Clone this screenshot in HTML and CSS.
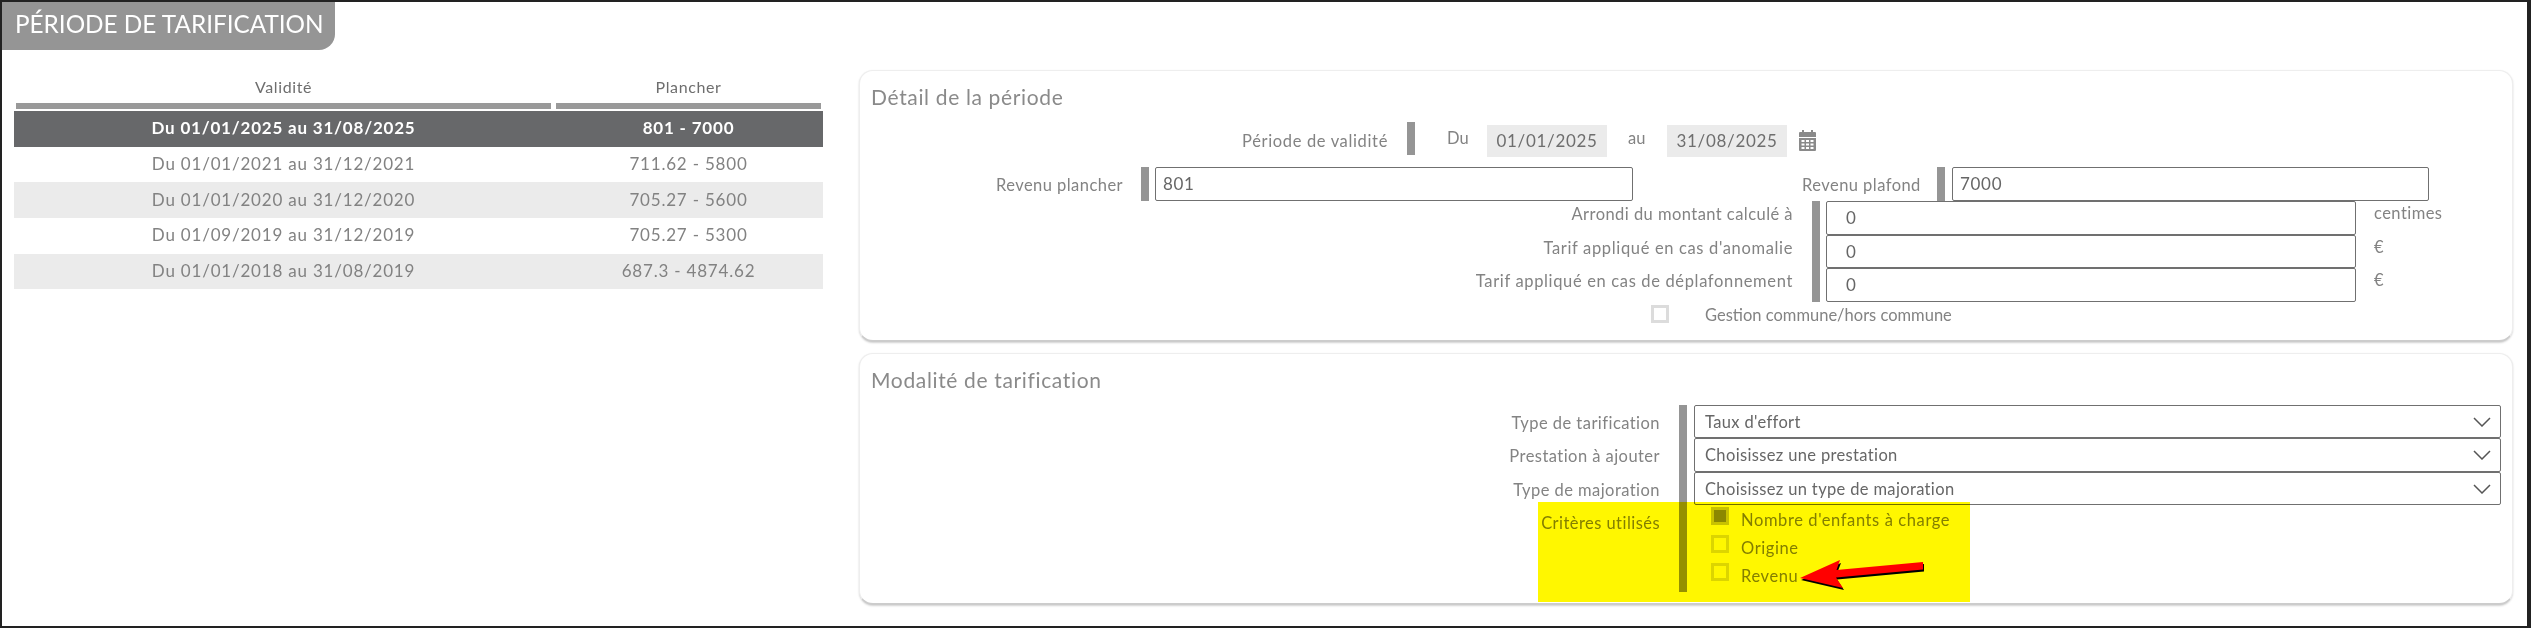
FILE: index.html
```html
<!DOCTYPE html>
<html lang="fr">
<head>
<meta charset="utf-8">
<title>Période de tarification</title>
<link rel="stylesheet" href="styles.css">
</head>
<body>
<div class="frame">
  <h1 class="tab">PÉRIODE DE TARIFICATION</h1>
  <div class="main">
    <section class="list">
      <div class="list-row list-head"><div class="th">Validité</div><div class="th">Plancher</div></div>
      <div class="list-row selected"><div>Du 01/01/2025 au 31/08/2025</div><div>801 - 7000</div></div>
      <div class="list-row"><div>Du 01/01/2021 au 31/12/2021</div><div>711.62 - 5800</div></div>
      <div class="list-row shaded"><div>Du 01/01/2020 au 31/12/2020</div><div>705.27 - 5600</div></div>
      <div class="list-row"><div>Du 01/09/2019 au 31/12/2019</div><div>705.27 - 5300</div></div>
      <div class="list-row shaded"><div>Du 01/01/2018 au 31/08/2019</div><div>687.3 - 4874.62</div></div>
    </section>
    <div class="panels">
      <section class="panel panel-detail">
        <h2 class="panel-title">Détail de la période</h2>
        <div class="validity">
          <div class="label wide validity-label">Période de validité</div>
          <div class="bar"></div>
          <span class="word word-du">Du</span>
          <div class="date">01/01/2025</div>
          <span class="word word-au">au</span>
          <div class="date">31/08/2025</div>
          <svg class="cal" viewBox="0 0 17 21" width="17" height="21" aria-hidden="true">
            <path fill="#8a8a8a" fill-rule="evenodd" d="M3 0h2v2h7V0h2v2h2a1 1 0 0 1 1 1v4H0V3a1 1 0 0 1 1-1h2zM0 8h17v12a1 1 0 0 1-1 1H1a1 1 0 0 1-1-1zM2.500 10v2h3v-2zM7 10v2h3v-2zM11.500 10v2h3v-2zM2.500 13.500v2h3v-2zM7 13.500v2h3v-2zM11.500 13.500v2h3v-2zM2.500 17v2h3v-2zM7 17v2h3v-2zM11.500 17v2h3v-2z"/>
          </svg>
        </div>
        <div class="revenue">
          <div class="label rev-floor-label">Revenu plancher</div>
          <div class="bar"></div>
          <div class="input rev-floor">801</div>
          <div class="label rev-ceil-label">Revenu plafond</div>
          <div class="bar"></div>
          <div class="input rev-ceil">7000</div>
        </div>
        <div class="amounts">
          <div class="label">Arrondi du montant calculé à</div>
          <div class="bar amounts-bar"></div>
          <div class="input amount">0</div>
          <div class="unit">centimes</div>
          <div class="label wide">Tarif appliqué en cas d'anomalie</div>
          <div class="input amount">0</div>
          <div class="unit">€</div>
          <div class="label wide">Tarif appliqué en cas de déplafonnement</div>
          <div class="input amount">0</div>
          <div class="unit">€</div>
        </div>
        <div class="commune">
          <span class="check"></span>
          <span class="label tight">Gestion commune/hors commune</span>
        </div>
      </section>
      <section class="panel panel-mode">
        <h2 class="panel-title">Modalité de tarification</h2>
        <div class="mode">
          <div class="label">Type de tarification</div>
          <div class="bar mode-bar"></div>
          <div class="select"><span>Taux d'effort</span><svg viewBox="0 0 18 10" width="18" height="10" aria-hidden="true"><path d="M1 1l8 8 8-8" fill="none" stroke="#555" stroke-width="1.500"/></svg></div>
          <div class="label">Prestation à ajouter</div>
          <div class="select"><span>Choisissez une prestation</span><svg viewBox="0 0 18 10" width="18" height="10" aria-hidden="true"><path d="M1 1l8 8 8-8" fill="none" stroke="#555" stroke-width="1.500"/></svg></div>
          <div class="label">Type de majoration</div>
          <div class="select"><span>Choisissez un type de majoration</span><svg viewBox="0 0 18 10" width="18" height="10" aria-hidden="true"><path d="M1 1l8 8 8-8" fill="none" stroke="#555" stroke-width="1.500"/></svg></div>
          <div class="label criteria-label">Critères utilisés</div>
          <div class="criteria">
            <div class="criterion"><span class="check checked"></span><span class="label criterion-name">Nombre d'enfants à charge</span></div>
            <div class="criterion"><span class="check"></span><span class="label criterion-name">Origine</span></div>
            <div class="criterion"><span class="check"></span><span class="label criterion-name">Revenu</span></div>
          </div>
        </div>
      </section>
    </div>
  </div>
  <div class="highlight"></div>
  <svg class="arrow" viewBox="0 0 126 30" width="126" height="30" aria-hidden="true">
    <path d="M1 19L41 2L37.500 11L124 3L124 10.500L37 18.500L44 29Z" fill="#000" transform="translate(0 1)"/>
    <path d="M0 18L40 0L36.500 10L123 2L123 9.500L36 17.500L43 28Z" fill="#ff0000"/>
  </svg>
</div>
</body>
</html>
```

FILE: styles.css
```css
* { box-sizing: border-box; }
html, body { margin: 0; padding: 0; background: #fff; }
body { font-family: "Lato", "Open Sans", sans-serif; font-size: 16.500px; color: #888; }

.frame { position: relative; width: 2531px; height: 628px; border: 2px solid #222; border-right-width: 4px; overflow: hidden; background: #fff; }

.tab { margin: 0; width: 333px; height: 48px; background: #959595; color: #fff; border-bottom-right-radius: 16px; font-weight: 400; font-size: 24.300px; line-height: 44px; padding-left: 13px; white-space: nowrap; }

.main { display: flex; align-items: flex-start; gap: 36px; margin-top: 20px; padding-left: 12px; }

.list { width: 809px; flex: none; }
.list-row { display: grid; grid-template-columns: 535px 265px; column-gap: 5px; padding: 0 2px 2px; height: 35.700px; align-items: center; text-align: center; color: #828282; font-size: 17px; letter-spacing: 0.800px; white-space: nowrap; }
.list-head { height: 41px; padding-bottom: 2px; align-items: end; color: #6e6e6e; }
.th { border-bottom: 6px solid #999; height: 39px; line-height: 22px; padding-top: 6px; font-size: 16px; letter-spacing: 0.600px; }
.selected { background: #67686a; color: #fff; font-weight: 700; }
.shaded { background: #ebebeb; }

.panels { width: 1654px; flex: none; display: flex; flex-direction: column; gap: 11px; }
.panel { border: 1px solid #eee; border-bottom: 2px solid #ccc; border-radius: 14px; box-shadow: 0 1px 2px rgba(0,0,0,.18); background: #fff; }
.panel-detail { height: 272px; }
.panel-mode { height: 252px; }
.panel-title { margin: 0; height: 51px; padding: 12px 0 0 11px; font-size: 21px; line-height: 28px; font-weight: 400; color: #8a8a8a; letter-spacing: 0.650px; }

.label { color: #838383; text-align: right; white-space: nowrap; letter-spacing: 0.450px; }
.wide { letter-spacing: 0.650px; }
.tight { letter-spacing: 0; }
.bar { width: 8px; background: #959595; }

.validity { display: flex; align-items: stretch; height: 33px; }
.validity-label { width: 528px; margin-right: 19px; line-height: 38px; }
.word { line-height: 32px; color: #838383; }
.word-du { margin-left: 32px; width: 40px; }
.word-au { width: 60px; padding-left: 21px; }
.date { width: 120px; height: 32px; margin-top: 3px; background: #ebebeb; color: #6e6e6e; text-align: center; line-height: 32px; letter-spacing: 0.700px; font-size: 17px; }
.cal { margin: 8px 0 0 12px; }

.revenue { display: flex; align-items: stretch; height: 34px; margin-top: 12px; }
.rev-floor-label { width: 263px; margin-right: 18px; line-height: 36px; }
.input { border: 1px solid #707070; border-radius: 2px; color: #666; font-size: 17px; padding-left: 7px; line-height: 32px; background: #fff; letter-spacing: 0.700px; }
.rev-floor { width: 478px; margin-left: 6px; }
.rev-ceil-label { margin-left: 169px; width: 117px; margin-right: 18px; line-height: 36px; }
.rev-ceil { width: 477px; margin-left: 7px; }

.amounts { display: grid; grid-template-columns: 952px 8px 536px auto; grid-template-rows: 33.700px 33.700px 33.700px; }
.amounts .label { width: 933px; line-height: 26px; }
.amounts-bar { grid-column: 2; grid-row: 1 / 4; }
.amount { grid-column: 3; margin-left: 6px; width: 530px; padding-left: 19px; }
.unit { padding-left: 18px; color: #838383; line-height: 24px; letter-spacing: 0.450px; }

.commune { display: flex; align-items: flex-start; margin: 3px 0 0 791px; gap: 36px; }
.commune .label { line-height: 20px; }
.check { flex: none; display: block; width: 18px; height: 18px; border: 3px solid #dcdcdc; background: #fff; }
.checked { background: #8c8c8c; border-color: #c9c9c9; }

.mode { display: grid; grid-template-columns: 819px 8px 814px; grid-template-rows: 33px 34px 33px 87px; }
.mode > .label { width: 800px; line-height: 36px; }
.mode-bar { grid-column: 2; grid-row: 1 / 5; }
.select { grid-column: 3; margin-left: 7px; width: 807px; border: 1px solid #707070; border-radius: 2px; display: flex; align-items: center; justify-content: space-between; padding: 0 9px 0 10px; color: #666; letter-spacing: 0.350px; }
.criteria { grid-column: 3; margin-left: 24px; padding-top: 2px; display: flex; flex-direction: column; gap: 10px; }
.criterion { display: flex; gap: 12px; height: 18px; }
.criterion-name { line-height: 26px; letter-spacing: 0.600px; }

.highlight { position: absolute; left: 1536px; top: 500px; width: 432px; height: 100px; background: #fff700; mix-blend-mode: multiply; }
.arrow { position: absolute; left: 1798px; top: 558px; }
```
